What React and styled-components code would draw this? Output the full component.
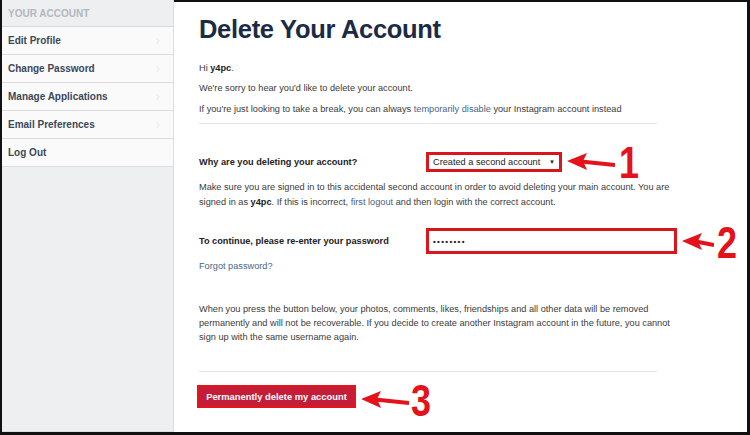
import React from "react";
import styled, { createGlobalStyle } from "styled-components";
import { ChevronRight } from "lucide-react";

const GlobalStyle = createGlobalStyle`
  html, body {
    margin: 0;
    padding: 0;
    background: #fff;
  }
  body {
    font-family: "Liberation Sans", Arial, sans-serif;
  }
`;

const Frame = styled.div`
  width: 750px;
  height: 435px;
  box-sizing: border-box;
  display: flex;
  border-left: 2px solid #111;
  border-right: 3px solid #111;
  border-bottom: 3px solid #111;
  overflow: hidden;
`;

const Sidebar = styled.aside`
  width: 171px;
  flex-shrink: 0;
  background: #eeeff1;
  border-right: 1px solid #dcdde0;
  border-bottom: 1px solid #dcdde0;
`;

const SideHeader = styled.div`
  height: 26px;
  padding-left: 6px;
  display: flex;
  align-items: center;
  font-size: 10px;
  font-weight: bold;
  color: #b3b7bd;
  border-bottom: 1px solid #d8d9dc;
`;

const SideItem = styled.a`
  height: 27px;
  padding: 0 10px 0 6px;
  display: flex;
  align-items: center;
  justify-content: space-between;
  background: #fafafb;
  border-bottom: 1px solid #dcdde0;
  font-size: 10px;
  font-weight: bold;
  color: #3c4757;
  text-decoration: none;
`;

const Main = styled.main`
  flex: 1;
  border-top: 2px solid #111;
  padding: 0 0 0 25px;
`;

const Content = styled.div`
  width: 458px;
`;

const Title = styled.h1`
  margin: 12px 0 0;
  font-size: 25.5px;
  line-height: 30px;
  font-weight: bold;
  color: #1b2b45;
  letter-spacing: -0.3px;
`;

const Text = styled.p`
  width: 474px;
  margin: ${(p) => p.$mt || 0}px 0 0;
  font-size: 9.2px;
  line-height: ${(p) => p.$lh || 14}px;
  color: #3a3a3a;
  b {
    color: #222;
  }
`;

const TextLink = styled.a`
  color: #4b6485;
  text-decoration: none;
`;

const Divider = styled.hr`
  margin: ${(p) => p.$mt}px 0 0;
  border: 0;
  border-top: 1px solid #e2e4e7;
`;

const FormRow = styled.div`
  margin-top: ${(p) => p.$mt}px;
  display: grid;
  grid-template-columns: 227px auto;
  align-items: center;
`;

const Label = styled.label`
  font-size: 9.2px;
  font-weight: bold;
  color: #222;
`;

const Control = styled.div`
  position: relative;
  width: ${(p) => p.$w}px;
`;

const SelectBox = styled.div`
  height: 20px;
  box-sizing: border-box;
  border: 3px solid #d9161c;
  padding: 0 4px 0 4px;
  display: flex;
  align-items: center;
  justify-content: space-between;
  font-size: 9.2px;
  color: #222;
  background: #fff;
  span:last-child {
    font-size: 6px;
  }
`;

const PasswordBox = styled.div`
  height: 26px;
  box-sizing: border-box;
  border: 3px solid #d9161c;
  padding: 0 4px;
  display: flex;
  align-items: center;
  font-size: 8px;
  font-weight: bold;
  letter-spacing: 1.3px;
  color: #222;
  background: #fff;
`;

const Button = styled.button`
  width: 159px;
  height: 23px;
  box-sizing: border-box;
  border: 2px solid #e3161f;
  background: #c41d38;
  color: #fff;
  font-family: "Liberation Sans", Arial, sans-serif;
  font-size: 9.4px;
  font-weight: bold;
  padding: 0;
  display: block;
`;

const ButtonWrap = styled.div`
  position: relative;
  width: 159px;
  margin: 13px 0 0 -2px;
`;

const Annotation = styled.div`
  position: absolute;
  left: calc(100% + ${(p) => p.$gap}px);
  top: ${(p) => p.$top}px;
  display: flex;
  align-items: center;
  gap: ${(p) => p.$numGap}px;
  pointer-events: none;
`;

const Number = styled.span`
  display: inline-block;
  font-family: "Liberation Sans Narrow", "Liberation Sans", Arial, sans-serif;
  font-weight: bold;
  font-size: 45px;
  line-height: 34px;
  color: #e3121b;
  transform: scaleX(0.8);
  transform-origin: left center;
`;

const Arrow = ({ width = 48 }) => (
  <svg width={width} height="20" viewBox={`0 0 ${width} 20`}>
    <polygon points="0,8 20,0 16,8 20,17" fill="#e3121b" />
    <line x1="14" y1="8.5" x2={width} y2="12" stroke="#e3121b" strokeWidth="4" />
  </svg>
);

const menu = [
  "Edit Profile",
  "Change Password",
  "Manage Applications",
  "Email Preferences",
  "Log Out",
];

export default function App() {
  return (
    <>
      <GlobalStyle />
      <Frame>
        <Sidebar>
          <SideHeader>YOUR ACCOUNT</SideHeader>
          {menu.map((item, i) => (
            <SideItem key={item} href="#">
              {item}
              {i < menu.length - 1 && (
                <ChevronRight size={10} color="#d2d4d8" strokeWidth={1.5} />
              )}
            </SideItem>
          ))}
        </Sidebar>
        <Main>
          <Content>
            <Title>Delete Your Account</Title>
            <Text $mt={17}>
              Hi <b>y4pc</b>.
            </Text>
            <Text $mt={6}>We're sorry to hear you'd like to delete your account.</Text>
            <Text $mt={7}>
              If you're just looking to take a break, you can always{" "}
              <TextLink href="#">temporarily disable</TextLink> your Instagram
              account instead
            </Text>
            <Divider $mt={7} />

            <FormRow $mt={28}>
              <Label>Why are you deleting your account?</Label>
              <Control $w={136}>
                <SelectBox>
                  <span>Created a second account</span>
                  <span>▼</span>
                </SelectBox>
                <Annotation $gap={5} $top={-6} $numGap={4}>
                  <Arrow width={48} />
                  <Number>1</Number>
                </Annotation>
              </Control>
            </FormRow>
            <Text $mt={8} $lh={15}>
              Make sure you are signed in to this accidental second account in
              order to avoid deleting your main account. You are signed in as{" "}
              <b>y4pc</b>. If this is incorrect, <TextLink href="#">first logout</TextLink>{" "}
              and then login with the correct account.
            </Text>

            <FormRow $mt={18}>
              <Label>To continue, please re-enter your password</Label>
              <Control $w={251}>
                <PasswordBox>••••••••</PasswordBox>
                <Annotation $gap={5} $top={-2} $numGap={3}>
                  <Arrow width={32} />
                  <Number>2</Number>
                </Annotation>
              </Control>
            </FormRow>
            <Text $mt={5}>
              <TextLink href="#">Forgot password?</TextLink>
            </Text>

            <Text $mt={29}>
              When you press the button below, your photos, comments, likes,
              friendships and all other data will be removed permanently and will
              not be recoverable. If you decide to create another Instagram account
              in the future, you cannot sign up with the same username again.
            </Text>
            <Divider $mt={27} />

            <ButtonWrap>
              <Button>Permanently delete my account</Button>
              <Annotation $gap={5} $top={-1} $numGap={2}>
                <Arrow width={48} />
                <Number>3</Number>
              </Annotation>
            </ButtonWrap>
          </Content>
        </Main>
      </Frame>
    </>
  );
}
